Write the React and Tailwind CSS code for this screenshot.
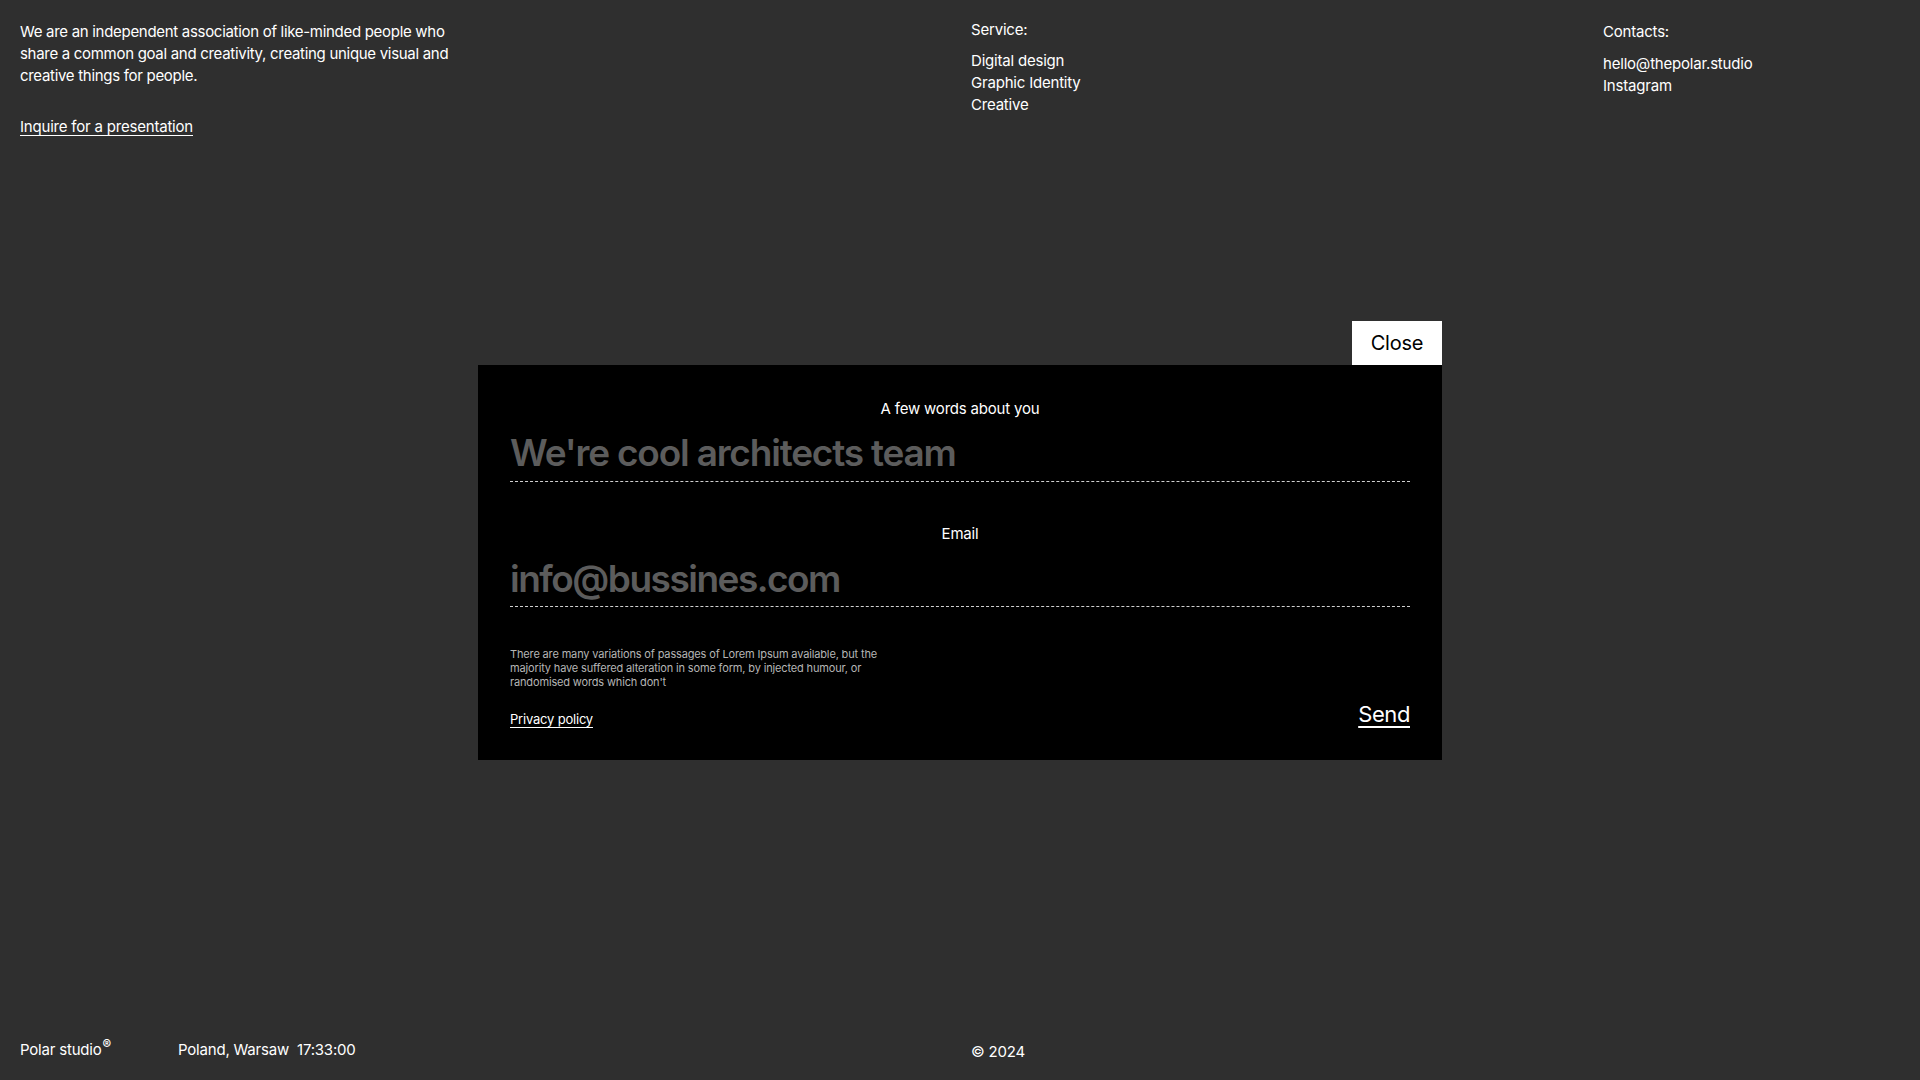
export default function App() {
  return (
    <div className="relative min-h-screen flex flex-col justify-between bg-[#2f2f2f] text-white font-['Inter','Liberation_Sans',sans-serif]">
      {/* header */}
      <header className="grid grid-cols-[951px_632px_1fr] px-5">
        <div className="pt-[21px]">
          <p className="w-[450px] text-[15px] leading-[22px] tracking-[-0.3px]">
            We are an independent association of like-minded people who share a common goal and creativity, creating unique visual and creative things for people.
          </p>
          <a href="#" className="inline-block mt-[29px] text-[15px] leading-[22px] underline underline-offset-[3px] tracking-[-0.2px]">
            Inquire for a presentation
          </a>
        </div>

        <div className="pt-[19px] text-[15px] leading-[22px] tracking-[-0.2px]">
          <p>Service:</p>
          <ul className="mt-[9px]">
            <li>Digital design</li>
            <li>Graphic Identity</li>
            <li>Creative</li>
          </ul>
        </div>

        <div className="pt-[21px] text-[15px] leading-[22px] tracking-[-0.2px]">
          <p>Contacts:</p>
          <ul className="mt-[10px]">
            <li>hello@thepolar.studio</li>
            <li>Instagram</li>
          </ul>
        </div>
      </header>

      {/* footer */}
      <footer className="grid grid-cols-[951px_1fr] px-5 pb-[17px] text-[15px] leading-[22px] tracking-[-0.2px]">
        <div className="flex items-center">
          <span className="w-[158px]">
            Polar studio<sup className="text-[13px] font-semibold ml-[1px]">®</sup>
          </span>
          <span className="w-[119px]">Poland, Warsaw</span>
          <span>17:33:00</span>
        </div>
        <div className="pt-[4px]">© 2024</div>
      </footer>

      {/* modal */}
      <div className="absolute inset-0 flex items-center justify-center">
        <div className="flex flex-col w-[964px]">
          <button className="self-end w-[90px] h-[44px] bg-white text-black text-[20px] tracking-[-0.2px]">
            Close
          </button>
          <form className="bg-black px-8 pt-[34px] pb-8">
            <label className="block text-center text-[15px] leading-[20px] tracking-[-0.2px]">
              A few words about you
            </label>
            <div className="mt-3 pb-[6px] border-b border-dashed border-[#d0d0d0]">
              <input
                type="text"
                placeholder="We're cool architects team"
                className="w-full bg-transparent outline-none text-[37px] leading-[44px] font-semibold tracking-[-1.2px] placeholder:text-[#5c5c5c]"
              />
            </div>

            <label className="block mt-[42px] text-center text-[15px] leading-[20px] tracking-[-0.2px]">
              Email
            </label>
            <div className="mt-[13px] pb-[5px] border-b border-dashed border-[#d0d0d0]">
              <input
                type="email"
                placeholder="info@bussines.com"
                className="w-full bg-transparent outline-none text-[37px] leading-[44px] font-semibold tracking-[-1.5px] placeholder:text-[#5c5c5c]"
              />
            </div>

            <p className="mt-[40px] w-[372px] text-[11px] leading-[14px] text-[#b5b5b5] tracking-[-0.15px]">
              There are many variations of passages of Lorem Ipsum available, but the majority have suffered alteration in some form, by injected humour, or randomised words which don't
            </p>

            <div className="mt-[11px] flex items-end justify-between">
              <a href="#" className="text-[13px] leading-[18px] underline underline-offset-[3px] tracking-[-0.2px]">
                Privacy policy
              </a>
              <button type="button" className="text-[22px] leading-[28px] underline underline-offset-[4px] tracking-[-0.4px]">
                Send
              </button>
            </div>
          </form>
        </div>
      </div>
    </div>
  );
}
